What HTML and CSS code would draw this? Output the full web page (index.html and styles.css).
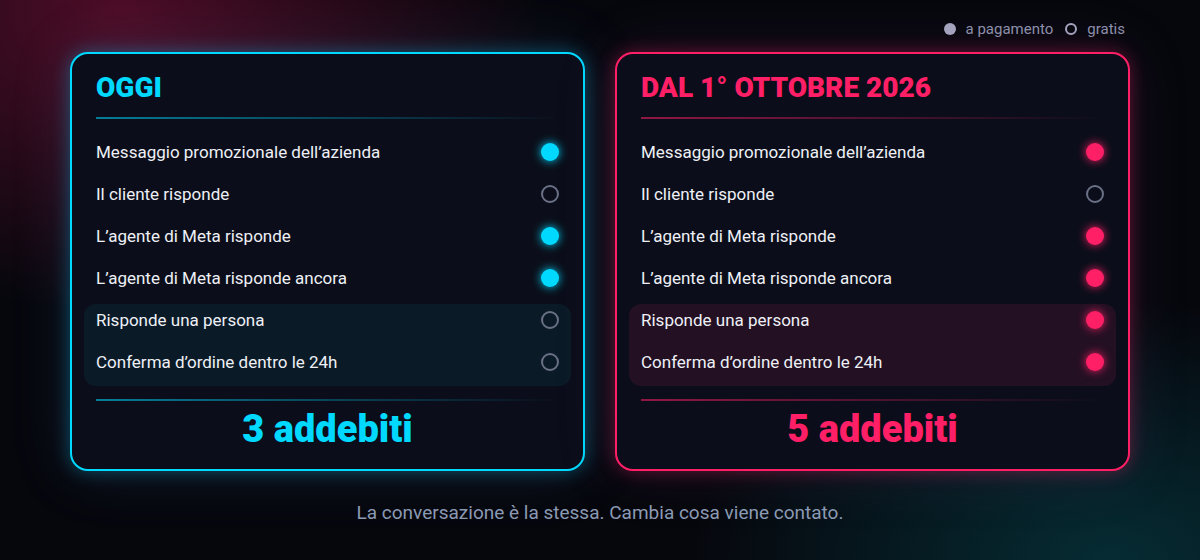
FILE: index.html
```html
<!DOCTYPE html>
<html lang="it">
<head>
<meta charset="UTF-8">
<meta name="viewport" content="width=device-width, initial-scale=1.0">
<title>Addebiti conversazione</title>
<link rel="stylesheet" href="styles.css">
</head>
<body>
<div class="page">
  <div class="legend">
    <span class="legend-item"><span class="mark mark-full"></span>a pagamento</span>
    <span class="legend-item"><span class="mark mark-empty"></span>gratis</span>
  </div>

  <div class="cards">
    <div class="card card-now">
      <h2 class="card-title">OGGI</h2>
      <div class="line"></div>
      <div class="rows">
        <div class="row"><span>Messaggio promozionale dell’azienda</span><span class="dot on"></span></div>
        <div class="row"><span>Il cliente risponde</span><span class="dot"></span></div>
        <div class="row"><span>L’agente di Meta risponde</span><span class="dot on"></span></div>
        <div class="row"><span>L’agente di Meta risponde ancora</span><span class="dot on"></span></div>
        <div class="group">
          <div class="row"><span>Risponde una persona</span><span class="dot"></span></div>
          <div class="row"><span>Conferma d’ordine dentro le 24h</span><span class="dot"></span></div>
        </div>
      </div>
      <div class="line"></div>
      <div class="total">3 addebiti</div>
    </div>

    <div class="card card-next">
      <h2 class="card-title">DAL 1° OTTOBRE 2026</h2>
      <div class="line"></div>
      <div class="rows">
        <div class="row"><span>Messaggio promozionale dell’azienda</span><span class="dot on"></span></div>
        <div class="row"><span>Il cliente risponde</span><span class="dot"></span></div>
        <div class="row"><span>L’agente di Meta risponde</span><span class="dot on"></span></div>
        <div class="row"><span>L’agente di Meta risponde ancora</span><span class="dot on"></span></div>
        <div class="group">
          <div class="row"><span>Risponde una persona</span><span class="dot on"></span></div>
          <div class="row"><span>Conferma d’ordine dentro le 24h</span><span class="dot on"></span></div>
        </div>
      </div>
      <div class="line"></div>
      <div class="total">5 addebiti</div>
    </div>
  </div>

  <p class="note">La conversazione è la stessa. Cambia cosa viene contato.</p>
</div>
</body>
</html>
```

FILE: styles.css
```css
html, body {
  margin: 0;
  height: 100%;
}
body {
  font-family: Roboto, "Liberation Sans", sans-serif;
  color: #eef0f6;
  background-color: #06070d;
  background-image:
    radial-gradient(ellipse 420px 300px at 120px 10px, rgba(90, 14, 44, 0.85), rgba(90, 14, 44, 0) 100%),
    radial-gradient(ellipse 420px 260px at 1110px 560px, rgba(6, 48, 56, 0.9), rgba(6, 48, 56, 0) 100%);
  overflow: hidden;
}
.page {
  width: 1060px;
  margin: 0 auto;
}

/* legend */
.legend {
  display: flex;
  justify-content: flex-end;
  gap: 12px;
  padding: 19px 5px 0 0;
  font-size: 15px;
  line-height: 20px;
  color: #8f93ad;
}
.legend-item {
  display: flex;
  align-items: center;
  gap: 10px;
}
.mark {
  width: 12px;
  height: 12px;
  border-radius: 50%;
  box-sizing: border-box;
}
.mark-full {
  background: #a6a8c2;
}
.mark-empty {
  border: 2px solid #a6a8c2;
}

/* cards */
.cards {
  display: grid;
  grid-template-columns: 1fr 1fr;
  gap: 30px;
  margin-top: 13px;
}
.card {
  --c: #00d9ff;
  --box: #0a1b27;
  background: #0b0e1a;
  border: 2px solid var(--c);
  border-radius: 18px;
  padding: 17px 24px 16px;
}
.card-now {
  box-shadow: 0 0 18px rgba(0, 200, 255, 0.35), 0 0 60px rgba(90, 130, 190, 0.18);
}
.card-next {
  --c: #ff1f66;
  --box: #231023;
  box-shadow: 0 0 18px rgba(255, 31, 102, 0.35), 0 0 60px rgba(130, 60, 120, 0.18);
}
.card-title {
  margin: 0;
  font-size: 28px;
  line-height: 33px;
  font-weight: 900;
  color: var(--c);
}
.line {
  height: 2px;
  margin-top: 13px;
  background: linear-gradient(90deg, color-mix(in srgb, var(--c) 55%, transparent), transparent);
}
.rows {
  display: flex;
  flex-direction: column;
  gap: 10px;
  margin: 17px 0 13px;
}
.group {
  display: flex;
  flex-direction: column;
  gap: 10px;
  margin: 0 -12px;
  padding: 0 12px 8px;
  background: var(--box);
  border-radius: 12px;
}
.row {
  height: 32px;
  display: flex;
  align-items: center;
  justify-content: space-between;
  font-size: 17px;
}
.dot {
  width: 18px;
  height: 18px;
  border-radius: 50%;
  box-sizing: border-box;
  border: 2px solid #6a7085;
}
.dot.on {
  border: none;
  background: var(--c);
  box-shadow: 0 0 10px var(--c);
}
.total {
  padding-top: 4px;
  text-align: center;
  font-size: 38px;
  line-height: 48px;
  font-weight: 900;
  color: var(--c);
}

.note {
  margin: 30px 0 0;
  text-align: center;
  font-size: 19px;
  line-height: 24px;
  color: #8b9ab3;
}
```
